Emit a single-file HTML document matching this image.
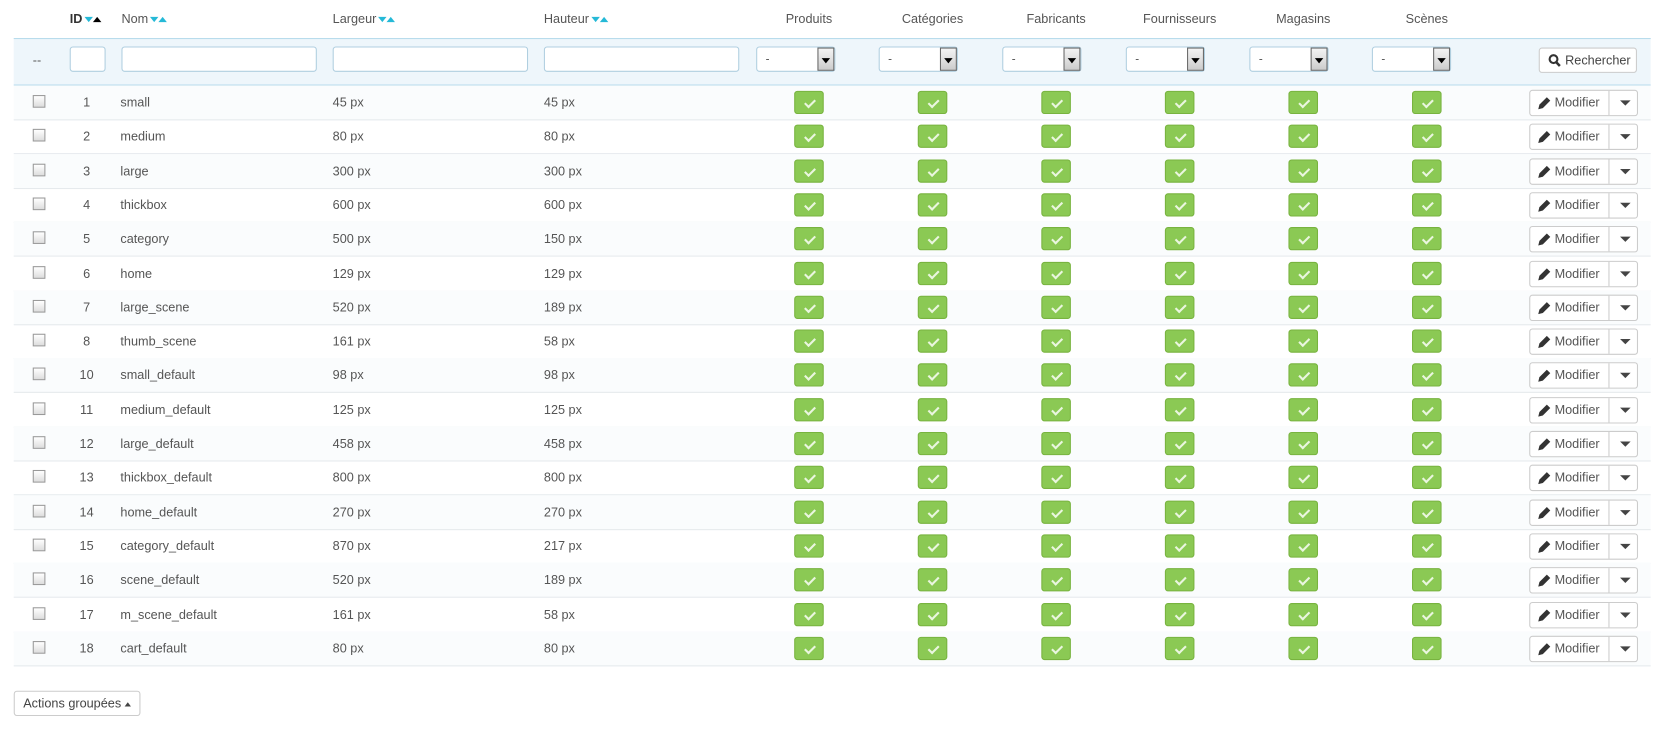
<!DOCTYPE html>
<html><head><meta charset="utf-8"><style>
*{box-sizing:border-box;margin:0;padding:0}
html,body{width:1656px;height:730px;overflow:hidden;background:#fff}
#w{position:absolute;left:0;top:0;width:1568px;height:692px;transform:scale(1.0561);transform-origin:0 0;font-family:"Liberation Sans",sans-serif;font-size:12px;color:#555}
.a{position:absolute}
.h{top:11px;font-size:12px;color:#555}
.tri{display:inline-block;width:0;height:0;border-left:4px solid transparent;border-right:4px solid transparent;vertical-align:middle}
.dn{border-top:5px solid #25b9d7;margin-left:2px}.up{border-bottom:5px solid #25b9d7}.upk{border-bottom:5px solid #000}
.fr{left:13px;top:36px;width:1550px;height:45px;background:#eef6fb;border-top:1px solid #b8dbec;border-bottom:1px solid #b8dbec}
.in{top:44px;height:24px;background:#fff;border:1px solid #b0cfe0;border-radius:3px}
.sel{top:44px;width:75px;height:24px;background:#fff;border:1px solid #b0cfe0;border-radius:3px}
.sel span{position:absolute;left:8px;top:5px;font-size:11px}
.sel i{position:absolute;right:0;top:0;width:16px;height:22px;border:1px solid #666;background:linear-gradient(#f4f4f4,#ccc)}
.sel i:after{content:"";position:absolute;left:3px;top:9px;border-left:4px solid transparent;border-right:4px solid transparent;border-top:5px solid #000}
.r{left:13px;width:1550px;height:33px;border-bottom:1px solid #e6eaed}
.r>*{position:absolute}
.cb{left:18px;top:9px;width:12px;height:12px;border:1px solid #999;background:linear-gradient(#fff,#ddd)}
.id{left:43px;width:52px;text-align:center;top:9px}
.t{top:9px}
.ck{top:5px;width:28px;height:22px;background:#8bc954;border:1px solid #78b33f;border-radius:3px}
.ck:after{content:"";position:absolute;left:11px;top:5px;width:4px;height:8px;border-right:2px solid #eaf6df;border-bottom:2px solid #eaf6df;transform:rotate(45deg)}
.mb{left:1435px;top:4px;width:103px;height:25px;border:1px solid #ccc;border-radius:3px;background:#fff}
.mb .l{position:absolute;left:0;top:0;width:75px;height:23px;border-right:1px solid #ccc;line-height:22px;padding-left:23px;font-size:12px}
.mb .p{position:absolute;left:7px;top:5px;width:13px;height:13px}
.mb .c{position:absolute;left:85px;top:9px;border-left:5px solid transparent;border-right:5px solid transparent;border-top:5px solid #444}
</style></head><body><div id="w">
<div class="a h" style="left:66px;color:#333;font-weight:bold">ID<span class="tri dn"></span><span class="tri upk"></span></div>
<div class="a h" style="left:115px">Nom<span class="tri dn"></span><span class="tri up"></span></div>
<div class="a h" style="left:315px">Largeur<span class="tri dn"></span><span class="tri up"></span></div>
<div class="a h" style="left:515px">Hauteur<span class="tri dn"></span><span class="tri up"></span></div>
<div class="a h" style="left:716px;width:100px;text-align:center">Produits</div>
<div class="a h" style="left:833px;width:100px;text-align:center">Catégories</div>
<div class="a h" style="left:950px;width:100px;text-align:center">Fabricants</div>
<div class="a h" style="left:1067px;width:100px;text-align:center">Fournisseurs</div>
<div class="a h" style="left:1184px;width:100px;text-align:center">Magasins</div>
<div class="a h" style="left:1301px;width:100px;text-align:center">Scènes</div>
<div class="a fr"></div>
<div class="a" style="left:31px;top:50px">--</div>
<div class="a in" style="left:66px;width:34px"></div>
<div class="a in" style="left:115px;width:185px"></div>
<div class="a in" style="left:315px;width:185px"></div>
<div class="a in" style="left:515px;width:185px"></div>
<div class="a sel" style="left:716px"><span>-</span><i></i></div>
<div class="a sel" style="left:832px"><span>-</span><i></i></div>
<div class="a sel" style="left:949px"><span>-</span><i></i></div>
<div class="a sel" style="left:1066px"><span>-</span><i></i></div>
<div class="a sel" style="left:1183px"><span>-</span><i></i></div>
<div class="a sel" style="left:1299px"><span>-</span><i></i></div>
<div class="a" style="left:1457px;top:45px;width:93px;height:24px;border:1px solid #ccc;border-radius:3px;background:#fff;line-height:22px;padding-left:24px;color:#444">Rechercher<svg style="position:absolute;left:8px;top:5px" width="12" height="13" viewBox="0 0 12 13"><circle cx="5" cy="5" r="3.7" fill="none" stroke="#333" stroke-width="2"/><path d="M7.5 7.8L11 11.5" stroke="#333" stroke-width="2.4"/></svg></div>

<div class="a r" style="top:81px;background:#fafcfd"><i class="cb"></i><span class="id">1</span><span class="t" style="left:101px">small</span><span class="t" style="left:302px">45 px</span><span class="t" style="left:502px">45 px</span><i class="ck" style="left:739px"></i><i class="ck" style="left:856px"></i><i class="ck" style="left:973px"></i><i class="ck" style="left:1090px"></i><i class="ck" style="left:1207px"></i><i class="ck" style="left:1324px"></i><div class="mb"><div class="l">Modifier</div><svg class="p" viewBox="0 0 12 12"><path d="M0.5 11.5l1-4 6.5-6.5 3 3-6.5 6.5z" fill="#333"/></svg><i class="c"></i></div></div>
<div class="a r" style="top:113px"><i class="cb"></i><span class="id">2</span><span class="t" style="left:101px">medium</span><span class="t" style="left:302px">80 px</span><span class="t" style="left:502px">80 px</span><i class="ck" style="left:739px"></i><i class="ck" style="left:856px"></i><i class="ck" style="left:973px"></i><i class="ck" style="left:1090px"></i><i class="ck" style="left:1207px"></i><i class="ck" style="left:1324px"></i><div class="mb"><div class="l">Modifier</div><svg class="p" viewBox="0 0 12 12"><path d="M0.5 11.5l1-4 6.5-6.5 3 3-6.5 6.5z" fill="#333"/></svg><i class="c"></i></div></div>
<div class="a r" style="top:146px;background:#fafcfd"><i class="cb"></i><span class="id">3</span><span class="t" style="left:101px">large</span><span class="t" style="left:302px">300 px</span><span class="t" style="left:502px">300 px</span><i class="ck" style="left:739px"></i><i class="ck" style="left:856px"></i><i class="ck" style="left:973px"></i><i class="ck" style="left:1090px"></i><i class="ck" style="left:1207px"></i><i class="ck" style="left:1324px"></i><div class="mb"><div class="l">Modifier</div><svg class="p" viewBox="0 0 12 12"><path d="M0.5 11.5l1-4 6.5-6.5 3 3-6.5 6.5z" fill="#333"/></svg><i class="c"></i></div></div>
<div class="a r" style="top:178px"><i class="cb"></i><span class="id">4</span><span class="t" style="left:101px">thickbox</span><span class="t" style="left:302px">600 px</span><span class="t" style="left:502px">600 px</span><i class="ck" style="left:739px"></i><i class="ck" style="left:856px"></i><i class="ck" style="left:973px"></i><i class="ck" style="left:1090px"></i><i class="ck" style="left:1207px"></i><i class="ck" style="left:1324px"></i><div class="mb"><div class="l">Modifier</div><svg class="p" viewBox="0 0 12 12"><path d="M0.5 11.5l1-4 6.5-6.5 3 3-6.5 6.5z" fill="#333"/></svg><i class="c"></i></div></div>
<div class="a r" style="top:210px;background:#fafcfd"><i class="cb"></i><span class="id">5</span><span class="t" style="left:101px">category</span><span class="t" style="left:302px">500 px</span><span class="t" style="left:502px">150 px</span><i class="ck" style="left:739px"></i><i class="ck" style="left:856px"></i><i class="ck" style="left:973px"></i><i class="ck" style="left:1090px"></i><i class="ck" style="left:1207px"></i><i class="ck" style="left:1324px"></i><div class="mb"><div class="l">Modifier</div><svg class="p" viewBox="0 0 12 12"><path d="M0.5 11.5l1-4 6.5-6.5 3 3-6.5 6.5z" fill="#333"/></svg><i class="c"></i></div></div>
<div class="a r" style="top:243px"><i class="cb"></i><span class="id">6</span><span class="t" style="left:101px">home</span><span class="t" style="left:302px">129 px</span><span class="t" style="left:502px">129 px</span><i class="ck" style="left:739px"></i><i class="ck" style="left:856px"></i><i class="ck" style="left:973px"></i><i class="ck" style="left:1090px"></i><i class="ck" style="left:1207px"></i><i class="ck" style="left:1324px"></i><div class="mb"><div class="l">Modifier</div><svg class="p" viewBox="0 0 12 12"><path d="M0.5 11.5l1-4 6.5-6.5 3 3-6.5 6.5z" fill="#333"/></svg><i class="c"></i></div></div>
<div class="a r" style="top:275px;background:#fafcfd"><i class="cb"></i><span class="id">7</span><span class="t" style="left:101px">large_scene</span><span class="t" style="left:302px">520 px</span><span class="t" style="left:502px">189 px</span><i class="ck" style="left:739px"></i><i class="ck" style="left:856px"></i><i class="ck" style="left:973px"></i><i class="ck" style="left:1090px"></i><i class="ck" style="left:1207px"></i><i class="ck" style="left:1324px"></i><div class="mb"><div class="l">Modifier</div><svg class="p" viewBox="0 0 12 12"><path d="M0.5 11.5l1-4 6.5-6.5 3 3-6.5 6.5z" fill="#333"/></svg><i class="c"></i></div></div>
<div class="a r" style="top:307px"><i class="cb"></i><span class="id">8</span><span class="t" style="left:101px">thumb_scene</span><span class="t" style="left:302px">161 px</span><span class="t" style="left:502px">58 px</span><i class="ck" style="left:739px"></i><i class="ck" style="left:856px"></i><i class="ck" style="left:973px"></i><i class="ck" style="left:1090px"></i><i class="ck" style="left:1207px"></i><i class="ck" style="left:1324px"></i><div class="mb"><div class="l">Modifier</div><svg class="p" viewBox="0 0 12 12"><path d="M0.5 11.5l1-4 6.5-6.5 3 3-6.5 6.5z" fill="#333"/></svg><i class="c"></i></div></div>
<div class="a r" style="top:339px;background:#fafcfd"><i class="cb"></i><span class="id">10</span><span class="t" style="left:101px">small_default</span><span class="t" style="left:302px">98 px</span><span class="t" style="left:502px">98 px</span><i class="ck" style="left:739px"></i><i class="ck" style="left:856px"></i><i class="ck" style="left:973px"></i><i class="ck" style="left:1090px"></i><i class="ck" style="left:1207px"></i><i class="ck" style="left:1324px"></i><div class="mb"><div class="l">Modifier</div><svg class="p" viewBox="0 0 12 12"><path d="M0.5 11.5l1-4 6.5-6.5 3 3-6.5 6.5z" fill="#333"/></svg><i class="c"></i></div></div>
<div class="a r" style="top:372px"><i class="cb"></i><span class="id">11</span><span class="t" style="left:101px">medium_default</span><span class="t" style="left:302px">125 px</span><span class="t" style="left:502px">125 px</span><i class="ck" style="left:739px"></i><i class="ck" style="left:856px"></i><i class="ck" style="left:973px"></i><i class="ck" style="left:1090px"></i><i class="ck" style="left:1207px"></i><i class="ck" style="left:1324px"></i><div class="mb"><div class="l">Modifier</div><svg class="p" viewBox="0 0 12 12"><path d="M0.5 11.5l1-4 6.5-6.5 3 3-6.5 6.5z" fill="#333"/></svg><i class="c"></i></div></div>
<div class="a r" style="top:404px;background:#fafcfd"><i class="cb"></i><span class="id">12</span><span class="t" style="left:101px">large_default</span><span class="t" style="left:302px">458 px</span><span class="t" style="left:502px">458 px</span><i class="ck" style="left:739px"></i><i class="ck" style="left:856px"></i><i class="ck" style="left:973px"></i><i class="ck" style="left:1090px"></i><i class="ck" style="left:1207px"></i><i class="ck" style="left:1324px"></i><div class="mb"><div class="l">Modifier</div><svg class="p" viewBox="0 0 12 12"><path d="M0.5 11.5l1-4 6.5-6.5 3 3-6.5 6.5z" fill="#333"/></svg><i class="c"></i></div></div>
<div class="a r" style="top:436px"><i class="cb"></i><span class="id">13</span><span class="t" style="left:101px">thickbox_default</span><span class="t" style="left:302px">800 px</span><span class="t" style="left:502px">800 px</span><i class="ck" style="left:739px"></i><i class="ck" style="left:856px"></i><i class="ck" style="left:973px"></i><i class="ck" style="left:1090px"></i><i class="ck" style="left:1207px"></i><i class="ck" style="left:1324px"></i><div class="mb"><div class="l">Modifier</div><svg class="p" viewBox="0 0 12 12"><path d="M0.5 11.5l1-4 6.5-6.5 3 3-6.5 6.5z" fill="#333"/></svg><i class="c"></i></div></div>
<div class="a r" style="top:469px;background:#fafcfd"><i class="cb"></i><span class="id">14</span><span class="t" style="left:101px">home_default</span><span class="t" style="left:302px">270 px</span><span class="t" style="left:502px">270 px</span><i class="ck" style="left:739px"></i><i class="ck" style="left:856px"></i><i class="ck" style="left:973px"></i><i class="ck" style="left:1090px"></i><i class="ck" style="left:1207px"></i><i class="ck" style="left:1324px"></i><div class="mb"><div class="l">Modifier</div><svg class="p" viewBox="0 0 12 12"><path d="M0.5 11.5l1-4 6.5-6.5 3 3-6.5 6.5z" fill="#333"/></svg><i class="c"></i></div></div>
<div class="a r" style="top:501px"><i class="cb"></i><span class="id">15</span><span class="t" style="left:101px">category_default</span><span class="t" style="left:302px">870 px</span><span class="t" style="left:502px">217 px</span><i class="ck" style="left:739px"></i><i class="ck" style="left:856px"></i><i class="ck" style="left:973px"></i><i class="ck" style="left:1090px"></i><i class="ck" style="left:1207px"></i><i class="ck" style="left:1324px"></i><div class="mb"><div class="l">Modifier</div><svg class="p" viewBox="0 0 12 12"><path d="M0.5 11.5l1-4 6.5-6.5 3 3-6.5 6.5z" fill="#333"/></svg><i class="c"></i></div></div>
<div class="a r" style="top:533px;background:#fafcfd"><i class="cb"></i><span class="id">16</span><span class="t" style="left:101px">scene_default</span><span class="t" style="left:302px">520 px</span><span class="t" style="left:502px">189 px</span><i class="ck" style="left:739px"></i><i class="ck" style="left:856px"></i><i class="ck" style="left:973px"></i><i class="ck" style="left:1090px"></i><i class="ck" style="left:1207px"></i><i class="ck" style="left:1324px"></i><div class="mb"><div class="l">Modifier</div><svg class="p" viewBox="0 0 12 12"><path d="M0.5 11.5l1-4 6.5-6.5 3 3-6.5 6.5z" fill="#333"/></svg><i class="c"></i></div></div>
<div class="a r" style="top:566px"><i class="cb"></i><span class="id">17</span><span class="t" style="left:101px">m_scene_default</span><span class="t" style="left:302px">161 px</span><span class="t" style="left:502px">58 px</span><i class="ck" style="left:739px"></i><i class="ck" style="left:856px"></i><i class="ck" style="left:973px"></i><i class="ck" style="left:1090px"></i><i class="ck" style="left:1207px"></i><i class="ck" style="left:1324px"></i><div class="mb"><div class="l">Modifier</div><svg class="p" viewBox="0 0 12 12"><path d="M0.5 11.5l1-4 6.5-6.5 3 3-6.5 6.5z" fill="#333"/></svg><i class="c"></i></div></div>
<div class="a r" style="top:598px;background:#fafcfd"><i class="cb"></i><span class="id">18</span><span class="t" style="left:101px">cart_default</span><span class="t" style="left:302px">80 px</span><span class="t" style="left:502px">80 px</span><i class="ck" style="left:739px"></i><i class="ck" style="left:856px"></i><i class="ck" style="left:973px"></i><i class="ck" style="left:1090px"></i><i class="ck" style="left:1207px"></i><i class="ck" style="left:1324px"></i><div class="mb"><div class="l">Modifier</div><svg class="p" viewBox="0 0 12 12"><path d="M0.5 11.5l1-4 6.5-6.5 3 3-6.5 6.5z" fill="#333"/></svg><i class="c"></i></div></div>

<div class="a" style="left:13px;top:654px;width:120px;height:24px;border:1px solid #ccc;border-radius:3px;background:#fff;line-height:22px;padding-left:8px;color:#444">Actions groupées <span class="tri" style="border-bottom:4px solid #444;border-left-width:3px;border-right-width:3px"></span></div>
</div></body></html>
